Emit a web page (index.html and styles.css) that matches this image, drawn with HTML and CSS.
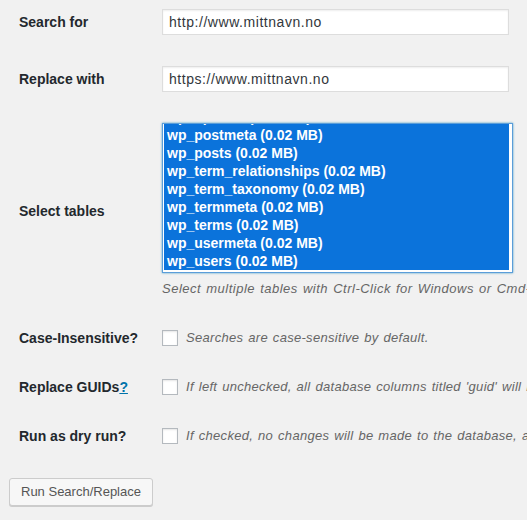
FILE: index.html
```html
<!DOCTYPE html>
<html>
<head>
<meta charset="utf-8">
<link rel="stylesheet" href="styles.css">
</head>
<body>
<form class="form">
  <div class="row row-first">
    <div class="label">Search for</div>
    <div class="field"><input class="text" type="text" value="http://www.mittnavn.no"></div>
  </div>
  <div class="row row-gap">
    <div class="label">Replace with</div>
    <div class="field"><input class="text" type="text" value="https://www.mittnavn.no"></div>
  </div>
  <div class="row row-gap">
    <div class="label">Select tables</div>
    <div class="field">
      <div class="select">
        <ul class="options">
          <li>wp_options (0.02 MB)</li>
          <li>wp_postmeta (0.02 MB)</li>
          <li>wp_posts (0.02 MB)</li>
          <li>wp_term_relationships (0.02 MB)</li>
          <li>wp_term_taxonomy (0.02 MB)</li>
          <li>wp_termmeta (0.02 MB)</li>
          <li>wp_terms (0.02 MB)</li>
          <li>wp_usermeta (0.02 MB)</li>
          <li>wp_users (0.02 MB)</li>
        </ul>
      </div>
      <p class="desc desc-select">Select multiple tables with Ctrl-Click for Windows or Cmd-Click for Mac.</p>
    </div>
  </div>
  <div class="row row-check row-check-first">
    <div class="label">Case-Insensitive?</div>
    <div class="field check">
      <span class="box"></span>
      <span class="desc">Searches are case-sensitive by default.</span>
    </div>
  </div>
  <div class="row row-check">
    <div class="label">Replace GUIDs<a class="help" href="#">?</a></div>
    <div class="field check">
      <span class="box"></span>
      <span class="desc">If left unchecked, all database columns titled 'guid' will be skipped.</span>
    </div>
  </div>
  <div class="row row-check">
    <div class="label">Run as dry run?</div>
    <div class="field check">
      <span class="box"></span>
      <span class="desc">If checked, no changes will be made to the database, allowing you to check the results beforehand.</span>
    </div>
  </div>
  <div class="submit">
    <button class="button" type="button">Run Search/Replace</button>
  </div>
</form>
</body>
</html>
```
FILE: styles.css
```css
html, body {
  margin: 0;
  padding: 0;
  background: #f1f1f1;
  overflow: hidden;
}
body {
  font-family: "Liberation Sans", Arial, sans-serif;
  color: #23282d;
  width: 527px;
  height: 520px;
}
.form {
  padding-top: 9px;
}
.row {
  display: flex;
  align-items: center;
}
.row-gap {
  margin-top: 31px;
}
.label {
  box-sizing: border-box;
  width: 162px;
  flex: none;
  padding-left: 19px;
  font-size: 14px;
  font-weight: bold;
  line-height: 20px;
  color: #23282d;
}
.help {
  color: #0073aa;
  text-decoration: underline;
}
.field {
  flex: none;
  white-space: nowrap;
}
.text {
  display: block;
  box-sizing: border-box;
  width: 347px;
  height: 26px;
  margin: 0;
  padding: 0 6px;
  border: 1px solid #ddd;
  background: #fff;
  box-shadow: inset 0 1px 2px rgba(0,0,0,.07);
  font-family: "Liberation Sans", Arial, sans-serif;
  font-size: 14px;
  letter-spacing: 0.55px;
  color: #32373c;
  outline: none;
}
.select {
  box-sizing: border-box;
  width: 351px;
  height: 150px;
  border: 1px solid #5b9dd9;
  box-shadow: 0 0 2px rgba(30,140,190,.8);
  background: #fff;
  padding: 0 3px 2px 1px;
}
.options {
  margin: 0;
  list-style: none;
  padding: 0;
  height: 146px;
  overflow: hidden;
  background: #0b73db;
}
.options li {
  height: 18px;
  line-height: 18px;
  padding-left: 3px;
  font-size: 14px;
  font-weight: bold;
  color: #fff;
}
.options li:first-child {
  margin-top: -16px;
}
.desc {
  font-size: 13px;
  font-style: italic;
  letter-spacing: 0.3px;
  word-spacing: 1px;
  color: #666;
  line-height: 18px;
}
.desc-select {
  margin: 7px 0 0;
  letter-spacing: 0.5px;
  word-spacing: 1px;
}
.row-check {
  margin-top: 29px;
  height: 20px;
}
.row-check-first {
  margin-top: 30px;
}
.check {
  display: flex;
  align-items: center;
  gap: 8px;
}
.box {
  display: block;
  box-sizing: border-box;
  width: 16px;
  height: 16px;
  border: 1px solid #b4b9be;
  background: #fff;
  box-shadow: inset 0 1px 2px rgba(0,0,0,.1);
  flex: none;
}
.submit {
  margin-top: 32px;
  padding-left: 9px;
}
.button {
  box-sizing: border-box;
  height: 28px;
  padding: 0 11px 1px;
  border: 1px solid #ccc;
  border-radius: 3px;
  background: #f7f7f7;
  box-shadow: 0 1px 0 #ccc;
  font-family: "Liberation Sans", Arial, sans-serif;
  font-size: 13px;
  color: #555;
  line-height: 26px;
}
```
